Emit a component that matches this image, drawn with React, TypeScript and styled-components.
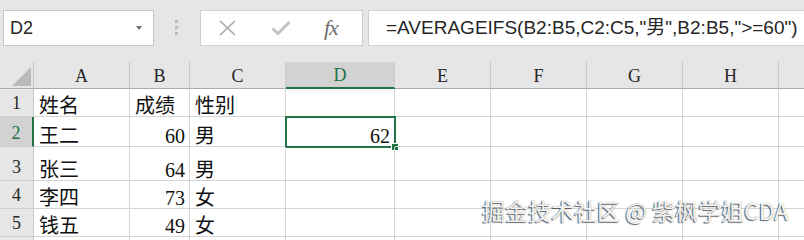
import { FC } from "react"
import styled, { createGlobalStyle } from "styled-components"

const GREEN = "#217346"

const GlobalStyle = createGlobalStyle`
    html, body {
        margin: 0;
        padding: 0;
        background: #fff;
        overflow: hidden;
    }
    * {
        box-sizing: border-box;
    }
`

const Page = styled.div`
    position: relative;
    width: 804px;
    height: 240px;
    overflow: hidden;
    background: #fff;
`

// formula bar
const Toolbar = styled.div`
    display: flex;
    align-items: flex-start;
    height: 62px;
    padding: 10px 0 0 3px;
    background: #e6e6e6;
`

const NameBox = styled.div`
    width: 151px;
    height: 36px;
    flex: none;
    display: flex;
    align-items: center;
    justify-content: space-between;
    padding: 0 11px 0 6px;
    background: #fff;
    border: 1px solid #c6c6c6;
    font: 18px "Liberation Sans", Arial, sans-serif;
    color: #262626;
`

const Caret = styled.span`
    width: 0;
    height: 0;
    border-left: 3px solid transparent;
    border-right: 3px solid transparent;
    border-top: 4px solid #6f6f6f;
`

const Dots = styled.div`
    display: flex;
    flex-direction: column;
    gap: 3px;
    margin: 10px 22px 0 21px;
`

const Dot = styled.span`
    width: 3px;
    height: 3px;
    background: #bdbdbd;
`

const IconBox = styled.div`
    width: 163px;
    height: 36px;
    flex: none;
    display: flex;
    align-items: center;
    gap: 34px;
    padding-left: 17px;
    background: #fff;
    border: 1px solid #d0d0d0;
`

const Fx = styled.span`
    font: italic 22px "Liberation Serif", "Times New Roman", serif;
    color: #6e6e6e;
    margin-left: -1px;
    letter-spacing: -1px;
`

const FormulaBox = styled.div`
    flex: 1;
    height: 36px;
    margin: 0 -12px 0 5px;
    padding-left: 17px;
    background: #fff;
    border: 1px solid #d0d0d0;
    font: 19px "Liberation Sans", Arial, "Noto Sans CJK SC", sans-serif;
    line-height: 34px;
    color: #262626;
    white-space: nowrap;
`

// sheet
const Sheet = styled.div`
    display: grid;
    grid-template-columns: 34px 96px 60px 96px 109px 96px 96px 96px 96px 96px;
    grid-template-rows: 27px 28px 30px 34px 28px 28px 28px;
`

const Corner = styled.div`
    display: flex;
    background: #e6e6e6;
    border-right: 1px solid #c8c8c8;
    border-bottom: 1px solid #ababab;
`

const CornerMark = styled.span`
    width: 0;
    height: 0;
    margin: auto 2px 2px auto;
    border-left: 19px solid transparent;
    border-bottom: 19px solid #b9b9b9;
`

const ColHead = styled.div<{ $active?: boolean }>`
    display: flex;
    align-items: center;
    justify-content: center;
    padding-top: 2px;
    background: ${({ $active }) => $active ? "#d2d2d2" : "#e6e6e6"};
    border-right: 1px solid #c8c8c8;
    border-bottom: ${({ $active }) => $active ? `2px solid ${GREEN}` : "1px solid #ababab"};
    color: ${({ $active }) => $active ? GREEN : "#262626"};
    font: 18px "Liberation Serif", "Times New Roman", serif;
`

const RowHead = styled.div<{ $active?: boolean }>`
    display: flex;
    align-items: flex-end;
    justify-content: center;
    padding-bottom: 2px;
    background: ${({ $active }) => $active ? "#d2d2d2" : "#e6e6e6"};
    border-right: ${({ $active }) => $active ? `2px solid ${GREEN}` : "1px solid #c8c8c8"};
    border-bottom: 1px solid #d0d0d0;
    color: ${({ $active }) => $active ? GREEN : "#262626"};
    font: 18px "Liberation Serif", "Times New Roman", serif;
`

const Cell = styled.div<{ $num?: boolean }>`
    position: relative;
    display: flex;
    align-items: flex-end;
    justify-content: ${({ $num }) => $num ? "flex-end" : "flex-start"};
    padding: 0 4px 0 5px;
    border-right: 1px solid #d4d4d4;
    border-bottom: 1px solid #d4d4d4;
    font: 20px "Liberation Serif", "Times New Roman", "Noto Sans CJK SC", serif;
    line-height: 1;
    color: #111;
    white-space: nowrap;
`

const Selection = styled.div`
    position: absolute;
    left: -1px;
    top: -1px;
    right: -2px;
    bottom: -2px;
    border: 2px solid ${GREEN};
    pointer-events: none;
`

const FillHandle = styled.span`
    position: absolute;
    right: -4px;
    bottom: -4px;
    width: 6px;
    height: 6px;
    background: ${GREEN};
    box-shadow: -1px -1px 0 #fff;
`

const Watermark = styled.div`
    position: absolute;
    left: 482px;
    top: 199px;
    font: 23px "Noto Sans CJK SC", "Noto Sans", sans-serif;
    line-height: 1;
    color: rgba(255, 255, 255, 0.96);
    text-shadow: -1px 1px 1px rgba(0, 0, 0, 0.6), 0 0 1px rgba(0, 0, 0, 0.5);
    white-space: nowrap;
`

const columns = ["A", "B", "C", "D", "E", "F", "G", "H", "I"]

const data: string[][] = [
    ["姓名", "成绩", "性别"],
    ["王二", "60", "男"],
    ["张三", "64", "男"],
    ["李四", "73", "女"],
    ["钱五", "49", "女"],
    [],
]

const isNum = (v: string) => /^\d+$/.test(v)

const XIcon = () => (
    <svg width="19" height="16" viewBox="0 0 19 16">
        <path d="M2 1 L17 15 M17 1 L2 15" stroke="#a8a8a8" strokeWidth="1.6" fill="none" />
    </svg>
)

const CheckIcon = () => (
    <svg width="20" height="16" viewBox="0 0 20 16">
        <path d="M1.5 8.5 L7 13.5 L18.5 2" stroke="#c2c2c2" strokeWidth="3" fill="none" />
    </svg>
)

const Row: FC<{ index: number, values: string[] }> = ({ index, values }) => (
    <>
        {/* row 6 only peeks in at the bottom edge, its number is below the fold */}
        <RowHead $active={index === 2}>{index <= data.length - 1 ? index : ""}</RowHead>
        {columns.map((c, i) => {
            const v = values[i] ?? ""
            if (index === 2 && c === "D") {
                return (
                    <Cell key={c} $num>
                        62
                        <Selection />
                        <FillHandle />
                    </Cell>
                )
            }
            return <Cell key={c} $num={isNum(v)}>{v}</Cell>
        })}
    </>
)

const App: FC = () => {
    return (
        <Page>
            <GlobalStyle />
            <Toolbar>
                <NameBox>
                    D2
                    <Caret />
                </NameBox>
                <Dots>
                    <Dot />
                    <Dot />
                    <Dot />
                </Dots>
                <IconBox>
                    <XIcon />
                    <CheckIcon />
                    <Fx>fx</Fx>
                </IconBox>
                <FormulaBox>=AVERAGEIFS(B2:B5,C2:C5,"男",B2:B5,"&gt;=60")</FormulaBox>
            </Toolbar>

            <Sheet>
                <Corner><CornerMark /></Corner>
                {columns.map(c => <ColHead key={c} $active={c === "D"}>{c === "I" ? "" : c}</ColHead>)}

                {data.map((row, r) => (
                    <Row key={r} index={r + 1} values={row} />
                ))}
            </Sheet>

            <Watermark>掘金技术社区 @ 紫枫学姐CDA</Watermark>
        </Page>
    )
}

export default App
